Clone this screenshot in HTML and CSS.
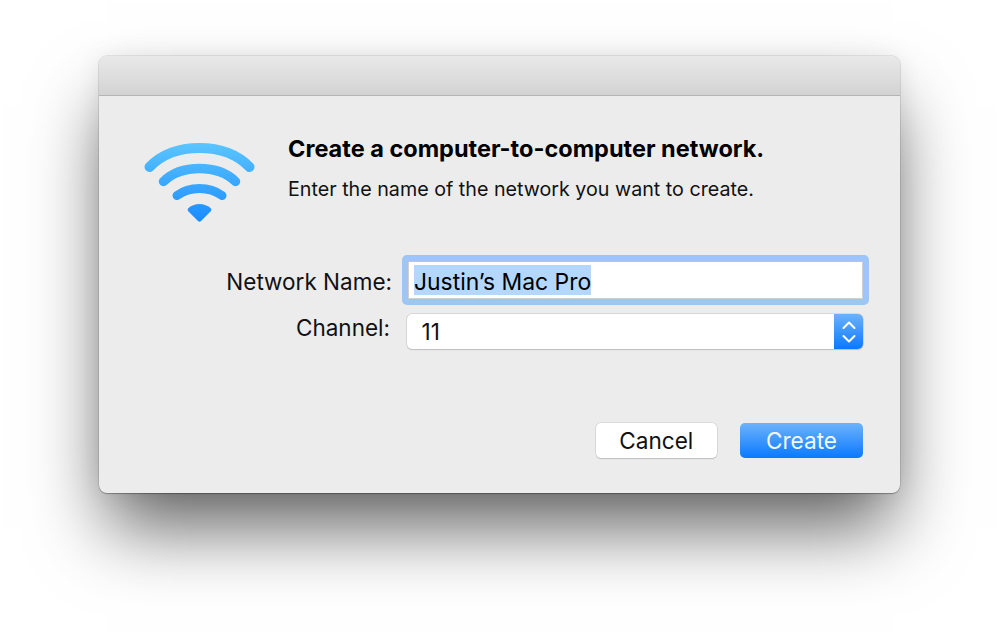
FILE: index.html
```html
<!DOCTYPE html>
<html lang="en">
<head>
<meta charset="utf-8">
<title>Create a computer-to-computer network</title>
<link rel="stylesheet" href="styles.css">
</head>
<body>
<div class="window">
  <div class="titlebar"></div>
  <div class="content">
    <div class="header">
      <svg class="wifi" width="112" height="84" viewBox="144 140 112 84" aria-hidden="true">
        <defs>
          <linearGradient id="wifiGrad" gradientUnits="userSpaceOnUse" x1="0" y1="142" x2="0" y2="222">
            <stop offset="0" stop-color="#5cc6ff"/>
            <stop offset="1" stop-color="#1a8bff"/>
          </linearGradient>
        </defs>
        <g fill="none" stroke="url(#wifiGrad)" stroke-linecap="round">
          <path d="M149.500 167C162 154 180 148 199.500 148C219 148 237 154 249.500 167" stroke-width="10"/>
          <path d="M163.500 181.500C172 173 185 168.500 199.500 168.500C214 168.500 227 173 235.500 181.500" stroke-width="9.500"/>
          <path d="M177 195.500C183 191 191 188.500 199.500 188.500C208 188.500 216 191 222 195.500" stroke-width="9"/>
        </g>
        <path d="M188 208.500C191 205.500 195 204 199.500 204C204 204 208 205.500 211 208.500C211.500 209.500 211.500 210.500 210.500 211.500L201 221C200 222 199 222 198 221L188.500 211.500C187.500 210.500 187.500 209.500 188 208.500Z" fill="url(#wifiGrad)"/>
      </svg>
      <div class="message">
        <h1 class="title">Create a computer-to-computer network.</h1>
        <p class="subtitle">Enter the name of the network you want to create.</p>
      </div>
    </div>
    <div class="form">
      <label class="label label-name">Network Name:</label>
      <div class="focus-ring"><div class="field"><span class="selected">Justin’s Mac Pro</span></div></div>
      <label class="label label-channel">Channel:</label>
      <div class="select">
        <span class="select-value">11</span>
        <span class="stepper">
          <svg width="16" height="24" viewBox="0 0 16 24" aria-hidden="true">
            <path d="M2.500 8L8 2.500L13.500 8M2.500 16L8 21.500L13.500 16" fill="none" stroke="#fff" stroke-width="2" stroke-linecap="round" stroke-linejoin="round"/>
          </svg>
        </span>
      </div>
    </div>
    <div class="actions">
      <button class="btn btn-cancel" type="button">Cancel</button>
      <button class="btn btn-create" type="button">Create</button>
    </div>
  </div>
</div>
</body>
</html>
```
FILE: styles.css
```css
* { box-sizing: border-box; }
html, body { margin: 0; height: 100%; background: #fff; overflow: hidden; }
body {
  padding: 56px 99px 0;
  font-family: Inter, "Liberation Sans", sans-serif;
  color: #111;
}
.window {
  width: 801px;
  height: 437px;
  border-radius: 8px;
  background: #ececec;
  box-shadow: 0 0 0 0.5px rgba(0,0,0,.16), 0 1px 1px rgba(0,0,0,.25), 0 42px 70px -8px rgba(0,0,0,.62), 0 0 24px rgba(0,0,0,.07);
  display: flex;
  flex-direction: column;
}
.titlebar {
  height: 40px;
  flex: none;
  border-radius: 8px 8px 0 0;
  background: linear-gradient(#e9e9e9, #d3d3d3);
  border-bottom: 1px solid #b4b4b4;
}
.content { flex: 1; display: flex; flex-direction: column; }
.header { display: flex; padding: 44px 0 0 45px; }
.wifi { display: block; flex: none; }
.message { margin-left: 32px; margin-top: -4px; }
.title { margin: 0; font-size: 23.500px; line-height: 26px; font-weight: 700; color: #000; }
.subtitle { margin: 14px 0 0; font-size: 19.700px; line-height: 26px; color: #111; }
.form {
  display: grid;
  grid-template-columns: 303px 467px;
  margin-top: 31px;
  row-gap: 9px;
  align-items: center;
}
.label { font-size: 22.500px; text-align: right; color: #111; }
.label-name { padding-right: 10px; padding-top: 3px; }
.label-channel { padding-right: 12px; padding-bottom: 8px; }
.focus-ring {
  height: 50px;
  border-radius: 5px;
  background: #9dc5f5;
  padding: 6px;
}
.field {
  height: 38px;
  background: #fff;
  box-shadow: inset 0 1px 0 #c4c4c4, inset 1px 0 0 #d0d0d0, inset -1px 0 0 #d0d0d0, inset 0 -1px 0 #d0d0d0;
  padding: 4px 6px;
  font-size: 22.900px;
  line-height: 32px;
  color: #000;
}
.selected { display: inline-block; background: #b3d7ff; height: 30px; line-height: 34px; }
.select {
  width: 456.500px;
  margin-left: 4.500px;
  height: 35px;
  border-radius: 5px;
  background: #fff;
  box-shadow: 0 0 0 0.5px #c2c2c2, 0 1px 1px #bdbdbd;
  display: flex;
  justify-content: space-between;
  align-items: center;
}
.select-value { padding-left: 15px; font-size: 22.500px; line-height: 35px; color: #111; }
.stepper {
  width: 29px;
  height: 35px;
  border-radius: 0 5px 5px 0;
  background: linear-gradient(#6cb2fa, #0a79ff);
  display: flex;
  align-items: center;
  justify-content: center;
}
.stepper svg { display: block; }
.actions {
  display: flex;
  justify-content: flex-end;
  gap: 23px;
  padding-right: 37px;
  margin-top: 74px;
}
.btn {
  height: 35px;
  border: 0;
  border-radius: 5px;
  font-family: inherit;
  font-size: 22.600px;
  padding: 0;
}
.btn-cancel {
  width: 121.500px;
  background: #fff;
  color: #111;
  box-shadow: 0 0 0 0.5px #c8c8c8, 0 1px 1px #b5b5b5;
}
.btn-create {
  width: 123px;
  background: linear-gradient(#6db3fb, #0a79ff);
  color: #f2f7ff;
}
```
